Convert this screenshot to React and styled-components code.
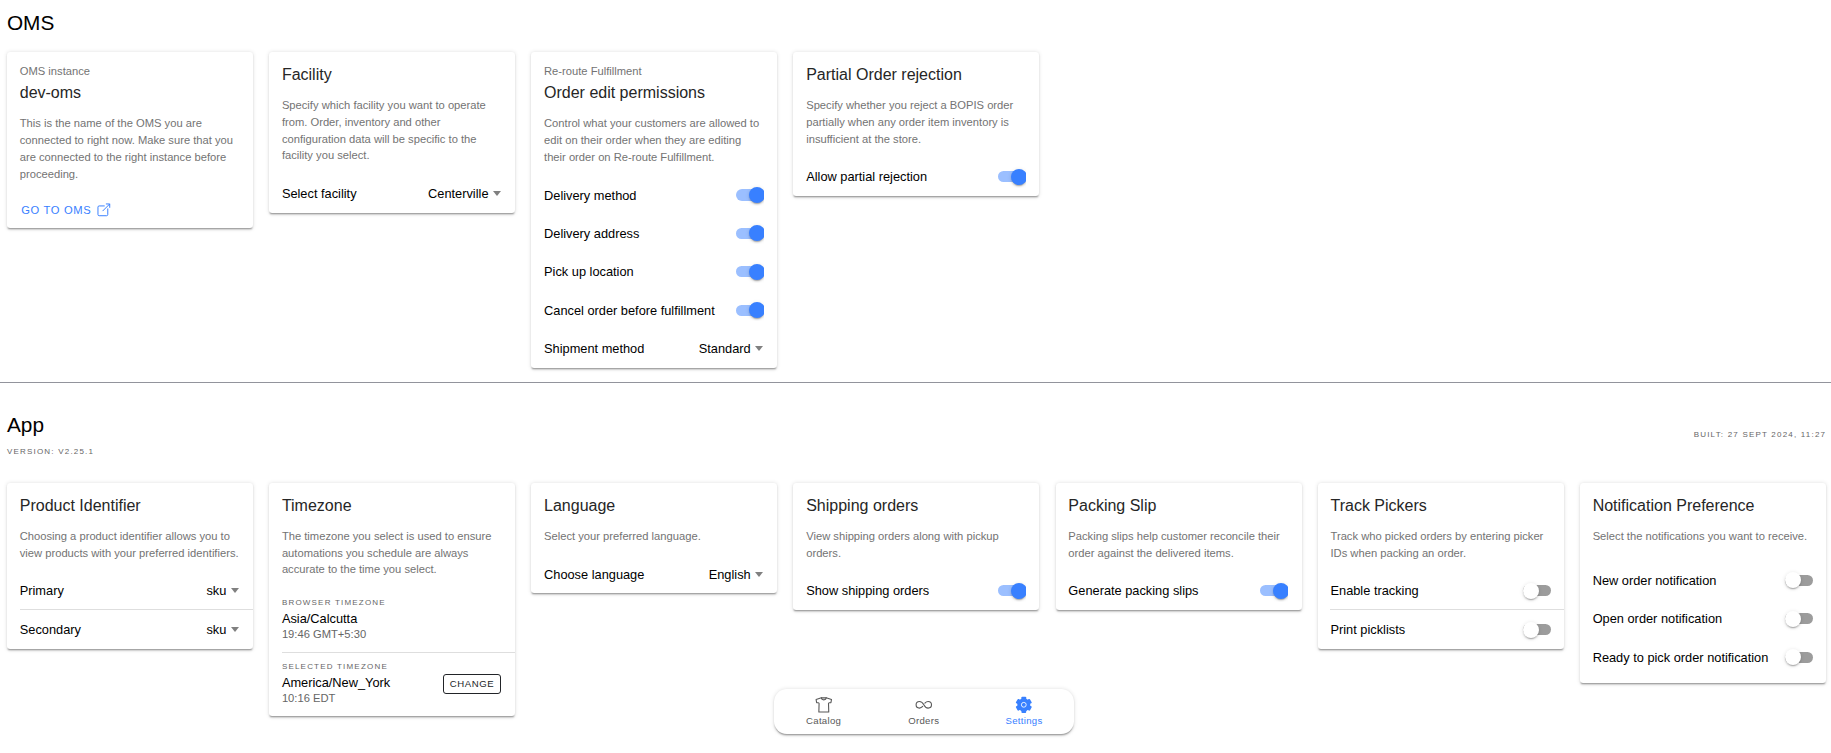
import React from "react";
import styled, { createGlobalStyle } from "styled-components";
import { IoOpenOutline, IoShirtOutline, IoInfiniteOutline } from "react-icons/io5";

const GlobalStyle = createGlobalStyle`
  *, *::before, *::after { box-sizing: border-box; }
  html, body { margin: 0; padding: 0; }
  body {
    background: #fff;
    color: #000;
    font-family: "Liberation Sans", Arial, sans-serif;
    overflow: hidden;
  }
  p, h1, h2 { margin: 0; font-weight: 400; }
  button { font-family: inherit; cursor: pointer; }
`;

const Page = styled.main`
  position: relative;
  height: 753px;
`;

const Section = styled.section`
  min-height: ${(p) => p.$minHeight || 0}px;
  padding: 0 5.15px 0 6.95px;
`;

const SectionHeader = styled.header`
  display: flex;
  align-items: flex-start;
  justify-content: space-between;
  height: ${(p) => p.$height}px;
  padding-top: ${(p) => p.$top}px;
`;

const SectionTitle = styled.h1`
  font-size: 20.8px;
  line-height: 24px;
`;

const Overline = styled.p`
  font-size: 8px;
  line-height: 10px;
  letter-spacing: 1.2px;
  text-transform: uppercase;
  color: #666;
`;

const Version = styled(Overline)`
  margin-top: 10px;
`;

const Built = styled(Overline)`
  margin-top: 17px;
  margin-right: -0.4px;
`;

const Divider = styled.hr`
  height: 1px;
  margin: 0;
  border: 0;
  background: #92949c;
`;

const Grid = styled.div`
  display: grid;
  grid-template-columns: repeat(7, 1fr);
  gap: 16.15px;
  align-items: start;
`;

const Card = styled.article`
  border-radius: 3.2px;
  background: #fff;
  overflow: hidden;
  box-shadow:
    0 2.4px 0.8px -1.6px rgba(0, 0, 0, 0.2),
    0 1.6px 1.6px 0 rgba(0, 0, 0, 0.14),
    0 0.8px 4px 0 rgba(0, 0, 0, 0.12);
`;

const CardHeader = styled.div`
  padding: 12.8px;
`;

const Subtitle = styled.p`
  margin-bottom: 4.9px;
  font-size: 11.2px;
  line-height: 13.4px;
  color: #737373;
`;

const Title = styled.h2`
  font-size: 16px;
  line-height: 19.2px;
  color: #262626;
`;

const Description = styled.p`
  padding: 0 12.8px 10.2px;
  font-size: 11.2px;
  line-height: 16.8px;
  color: #737373;
`;

const List = styled.div`
  padding: ${(p) => (p.$inset ? "6.4px 0" : "0")};
`;

const Item = styled.div`
  display: flex;
  align-items: center;
  justify-content: space-between;
  min-height: ${(p) => (p.$lined ? 38.7 : 38.4)}px;
  margin-left: 12.8px;
  padding-right: 13.1px;
  border-bottom: ${(p) => (p.$lined ? "1px solid #dedede" : "0")};
  font-size: 12.8px;
  line-height: 15px;
  white-space: nowrap;
`;

const ZoneItem = styled(Item)`
  height: ${(p) => (p.$lined ? 64.1 : 63.6)}px;
  padding-bottom: 1px;
`;

const ZoneName = styled.p`
  margin-top: 2.8px;
  font-size: 12.8px;
  line-height: 15px;
`;

const ZoneTime = styled.p`
  margin-top: 1px;
  font-size: 11.2px;
  line-height: 14px;
  color: #666;
`;

const SelectValue = styled.span`
  display: inline-flex;
  align-items: center;
  gap: 4.6px;
  padding-right: 0.9px;
`;

const Caret = styled.i`
  border: 4.5px solid transparent;
  border-width: 5px 4px 0;
  border-top-color: #808080;
`;

const Track = styled.span`
  position: relative;
  width: 28px;
  height: 22px;
  overflow: ${(p) => (p.$on ? "hidden" : "visible")};

  &::before {
    content: "";
    position: absolute;
    left: 0;
    top: 5.4px;
    width: 28px;
    height: 11.2px;
    border-radius: 11.2px;
    background: ${(p) => (p.$on ? "#9bbfff" : "#9c9c9c")};
  }

  &::after {
    content: "";
    position: absolute;
    left: ${(p) => (p.$on ? 12.8 : 0)}px;
    top: 3px;
    width: 16px;
    height: 16px;
    border-radius: 50%;
    background: ${(p) => (p.$on ? "#3880ff" : "#fff")};
    box-shadow:
      0 2.4px 0.8px -1.6px rgba(0, 0, 0, 0.2),
      0 1.6px 1.6px 0 rgba(0, 0, 0, 0.14),
      0 0.8px 4px 0 rgba(0, 0, 0, 0.12);
  }
`;

const LinkButton = styled.button`
  display: flex;
  align-items: center;
  height: 28.8px;
  margin: 3.2px 14.2px;
  padding: 0;
  border: 0;
  background: none;
  color: #3880ff;
  font-size: 11.2px;
  letter-spacing: 0.06em;

  svg {
    width: 15.7px;
    height: 15.7px;
    margin-left: 4.4px;
  }
`;

const OutlineButton = styled.button`
  height: 20px;
  margin-right: 1.3px;
  padding: 0 5.5px;
  border: 1px solid #222428;
  border-radius: 3px;
  background: none;
  color: #222428;
  font-size: 9.6px;
  letter-spacing: 0.06em;
`;

const TabBar = styled.nav`
  position: absolute;
  left: 773.5px;
  top: 688.8px;
  display: flex;
  width: 300.6px;
  height: 45.2px;
  border-radius: 12.8px;
  background: #fff;
  box-shadow:
    0 2.4px 0.8px -1.6px rgba(0, 0, 0, 0.2),
    0 1.6px 1.6px 0 rgba(0, 0, 0, 0.14),
    0 0.8px 4px 0 rgba(0, 0, 0, 0.12);
`;

const Tab = styled.a`
  display: flex;
  flex: 1;
  flex-direction: column;
  align-items: center;
  padding-top: 7.4px;
  color: ${(p) => (p.$active ? "#3880ff" : "#595959")};
  font-size: 9.6px;
  line-height: 11px;
  letter-spacing: 0.03em;

  svg {
    width: 17.6px;
    height: 17.6px;
    margin-bottom: 1.4px;
  }
`;

const GearIcon = () => (
  <svg viewBox="-8.8 -8.8 17.6 17.6" fill="currentColor" aria-hidden="true">
    <circle r="6.5" />
    {[0, 60, 120].map((angle) => (
      <rect
        key={angle}
        x="-2.4"
        y="-8.1"
        width="4.8"
        height="16.2"
        rx="0.9"
        transform={`rotate(${angle})`}
      />
    ))}
    <circle r="2.4" fill="none" stroke="#fff" strokeOpacity="0.85" strokeWidth="1" />
  </svg>
);

const Toggle = ({ on = false }) => (
  <Track role="switch" aria-checked={on} $on={on} />
);

const ToggleItem = ({ label, on, lined }) => (
  <Item $lined={lined}>
    <span>{label}</span>
    <Toggle on={on} />
  </Item>
);

const SelectItem = ({ label, value, lined }) => (
  <Item $lined={lined}>
    <span>{label}</span>
    <SelectValue>
      {value}
      <Caret />
    </SelectValue>
  </Item>
);

const SettingCard = ({ subtitle, title, description, children }) => (
  <Card>
    <CardHeader>
      {subtitle && <Subtitle>{subtitle}</Subtitle>}
      <Title>{title}</Title>
    </CardHeader>
    <Description>{description}</Description>
    {children}
  </Card>
);

export default function App() {
  return (
    <Page>
      <GlobalStyle />
      <Section $minHeight={382}>
        <SectionHeader $height={52.2} $top={11}>
          <SectionTitle>OMS</SectionTitle>
        </SectionHeader>
        <Grid>
          <SettingCard
            subtitle="OMS instance"
            title="dev-oms"
            description="This is the name of the OMS you are connected to right now. Make sure that you are connected to the right instance before proceeding."
          >
            <LinkButton>
              GO TO OMS
              <IoOpenOutline />
            </LinkButton>
          </SettingCard>
          <SettingCard
            title="Facility"
            description="Specify which facility you want to operate from. Order, inventory and other configuration data will be specific to the facility you select."
          >
            <SelectItem label="Select facility" value="Centerville" />
          </SettingCard>
          <SettingCard
            subtitle="Re-route Fulfillment"
            title="Order edit permissions"
            description="Control what your customers are allowed to edit on their order when they are editing their order on Re-route Fulfillment."
          >
            <ToggleItem label="Delivery method" on />
            <ToggleItem label="Delivery address" on />
            <ToggleItem label="Pick up location" on />
            <ToggleItem label="Cancel order before fulfillment" on />
            <SelectItem label="Shipment method" value="Standard" />
          </SettingCard>
          <SettingCard
            title="Partial Order rejection"
            description="Specify whether you reject a BOPIS order partially when any order item inventory is insufficient at the store."
          >
            <ToggleItem label="Allow partial rejection" on />
          </SettingCard>
        </Grid>
      </Section>
      <Divider />
      <Section>
        <SectionHeader $height={100.1} $top={30}>
          <div>
            <SectionTitle>App</SectionTitle>
            <Version>Version: v2.25.1</Version>
          </div>
          <Built>Built: 27 Sept 2024, 11:27</Built>
        </SectionHeader>
        <Grid>
          <SettingCard
            title="Product Identifier"
            description="Choosing a product identifier allows you to view products with your preferred identifiers."
          >
            <SelectItem label="Primary" value="sku" lined />
            <SelectItem label="Secondary" value="sku" />
          </SettingCard>
          <SettingCard
            title="Timezone"
            description="The timezone you select is used to ensure automations you schedule are always accurate to the time you select."
          >
            <ZoneItem $lined>
              <div>
                <Overline>Browser timezone</Overline>
                <ZoneName>Asia/Calcutta</ZoneName>
                <ZoneTime>19:46 GMT+5:30</ZoneTime>
              </div>
            </ZoneItem>
            <ZoneItem>
              <div>
                <Overline>Selected timezone</Overline>
                <ZoneName>America/New_York</ZoneName>
                <ZoneTime>10:16 EDT</ZoneTime>
              </div>
              <OutlineButton>CHANGE</OutlineButton>
            </ZoneItem>
          </SettingCard>
          <SettingCard title="Language" description="Select your preferred language.">
            <SelectItem label="Choose language" value="English" />
          </SettingCard>
          <SettingCard
            title="Shipping orders"
            description="View shipping orders along with pickup orders."
          >
            <ToggleItem label="Show shipping orders" on />
          </SettingCard>
          <SettingCard
            title="Packing Slip"
            description="Packing slips help customer reconcile their order against the delivered items."
          >
            <ToggleItem label="Generate packing slips" on />
          </SettingCard>
          <SettingCard
            title="Track Pickers"
            description="Track who picked orders by entering picker IDs when packing an order."
          >
            <ToggleItem label="Enable tracking" lined />
            <ToggleItem label="Print picklists" />
          </SettingCard>
          <SettingCard
            title="Notification Preference"
            description="Select the notifications you want to receive."
          >
            <List $inset>
              <ToggleItem label="New order notification" />
              <ToggleItem label="Open order notification" />
              <ToggleItem label="Ready to pick order notification" />
            </List>
          </SettingCard>
        </Grid>
      </Section>
      <TabBar>
        <Tab>
          <IoShirtOutline />
          Catalog
        </Tab>
        <Tab>
          <IoInfiniteOutline />
          Orders
        </Tab>
        <Tab $active>
          <GearIcon />
          Settings
        </Tab>
      </TabBar>
    </Page>
  );
}
